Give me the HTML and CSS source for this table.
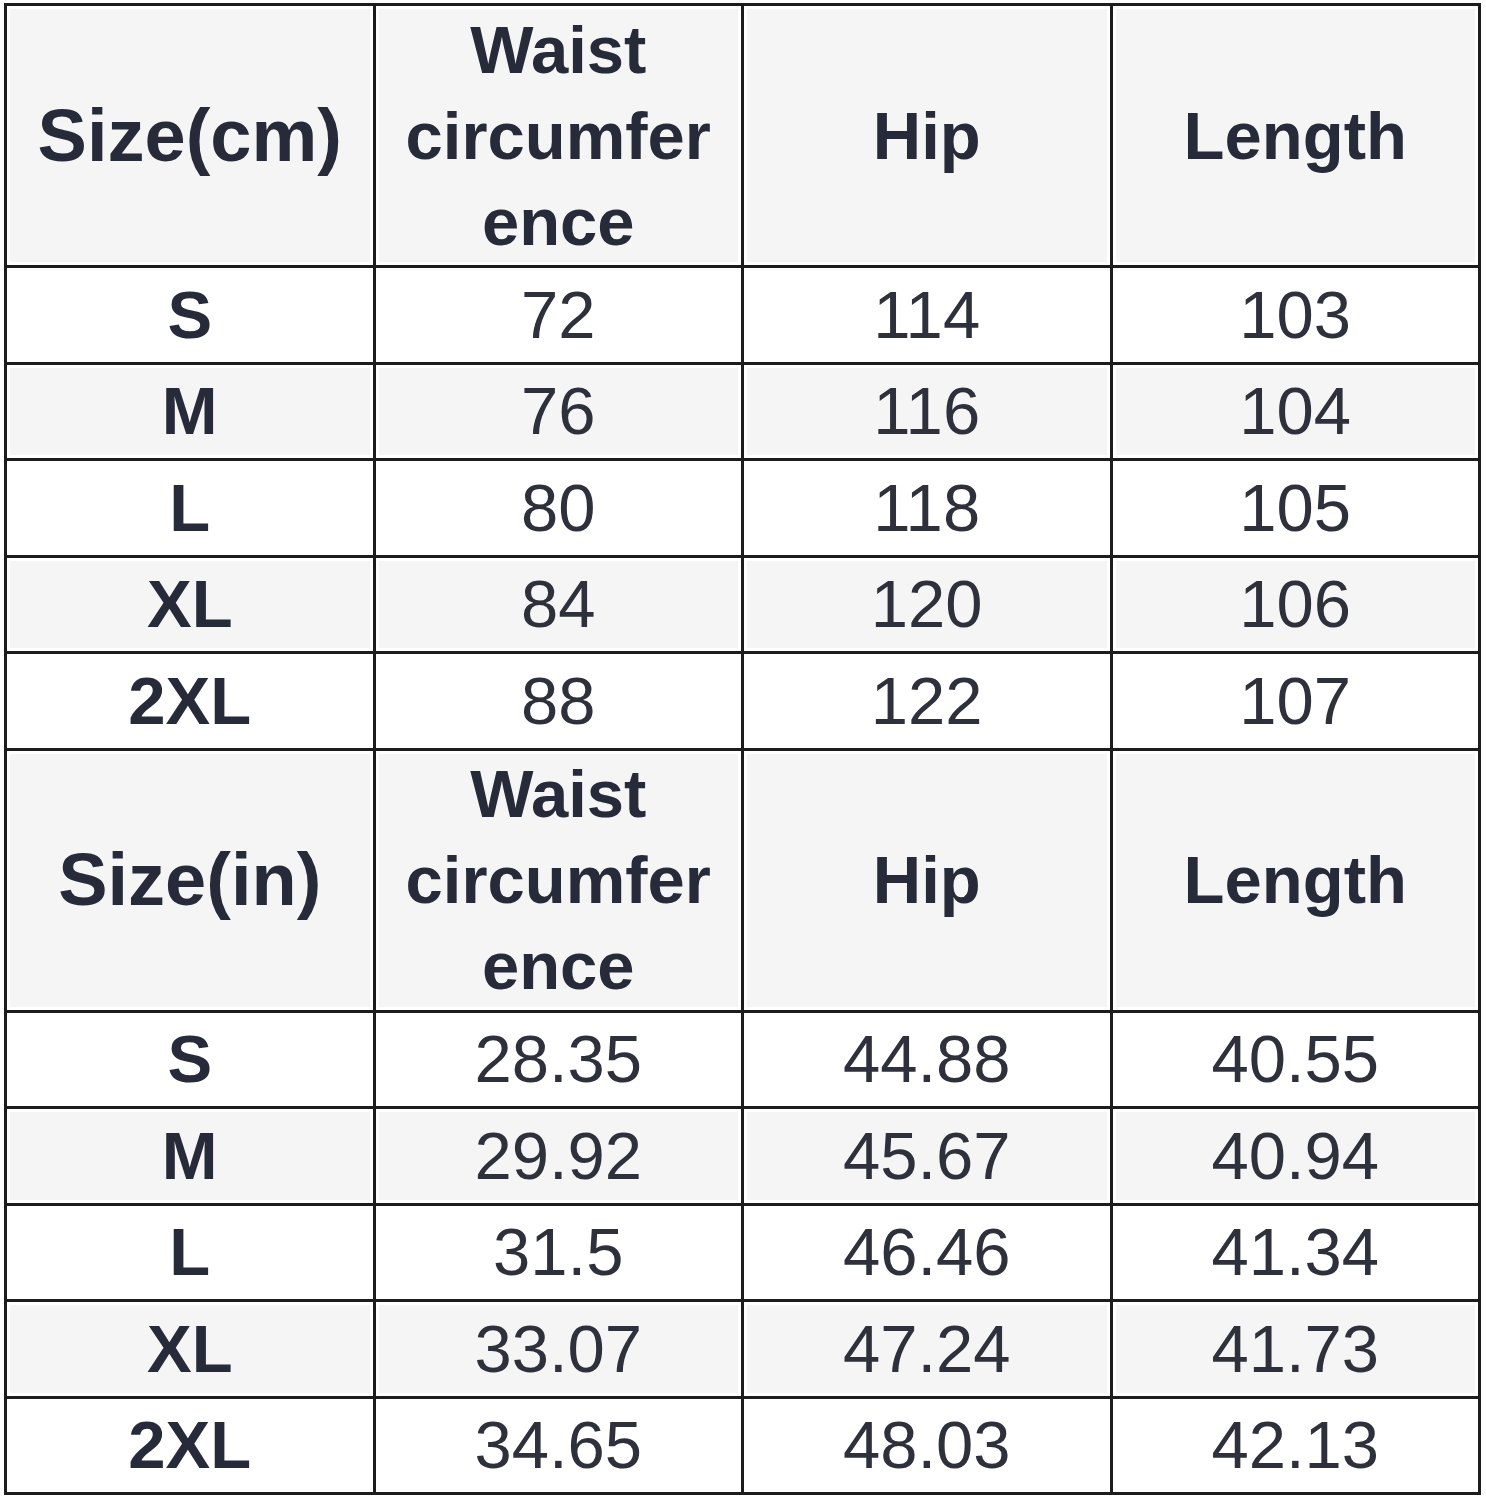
FILE: index.html
```html
<!DOCTYPE html>
<html lang="en">
<head>
<meta charset="utf-8">
<title>Size chart</title>
<link rel="stylesheet" href="styles.css">
</head>
<body>
<table class="chart">
  <tbody>
    <tr class="head">
      <th class="unit">Size(cm)</th>
      <th>Waist circumference</th>
      <th>Hip</th>
      <th>Length</th>
    </tr>
    <tr class="row"><th>S</th><td>72</td><td>114</td><td>103</td></tr>
    <tr class="row alt"><th>M</th><td>76</td><td>116</td><td>104</td></tr>
    <tr class="row"><th>L</th><td>80</td><td>118</td><td>105</td></tr>
    <tr class="row alt"><th>XL</th><td>84</td><td>120</td><td>106</td></tr>
    <tr class="row"><th>2XL</th><td>88</td><td>122</td><td>107</td></tr>
    <tr class="head">
      <th class="unit">Size(in)</th>
      <th>Waist circumference</th>
      <th>Hip</th>
      <th>Length</th>
    </tr>
    <tr class="row"><th>S</th><td>28.35</td><td>44.88</td><td>40.55</td></tr>
    <tr class="row alt"><th>M</th><td>29.92</td><td>45.67</td><td>40.94</td></tr>
    <tr class="row"><th>L</th><td>31.5</td><td>46.46</td><td>41.34</td></tr>
    <tr class="row alt"><th>XL</th><td>33.07</td><td>47.24</td><td>41.73</td></tr>
    <tr class="row"><th>2XL</th><td>34.65</td><td>48.03</td><td>42.13</td></tr>
  </tbody>
</table>
</body>
</html>
```
FILE: styles.css
```css
html, body {
  margin: 0;
  padding: 0;
  background: #ffffff;
}

.chart {
  margin: 3px 0 0 4px;
  width: 1477px;
  border-collapse: separate;
  border-spacing: 3px;
  background: #1c1c1c;
  table-layout: fixed;
  font-family: "Liberation Sans", Arial, sans-serif;
  color: #272b39;
}

.chart th,
.chart td {
  padding: 0 14px;
  text-align: center;
  vertical-align: middle;
  background: #ffffff;
  font-size: 67px;
  line-height: 86px;
  overflow-wrap: anywhere;
}

.chart th {
  font-weight: bold;
}

.chart td {
  font-weight: normal;
  color: #2e313b;
}

.head th {
  height: 259px;
  background: #f5f5f5;
  box-shadow: inset 0 0 0 3px #ffffff;
}

.head .unit {
  font-size: 74px;
}

.row th,
.row td {
  height: 93.5px;
}

.alt th,
.alt td {
  background: #f5f5f5;
  box-shadow: inset 0 0 0 3px #ffffff;
}
```
